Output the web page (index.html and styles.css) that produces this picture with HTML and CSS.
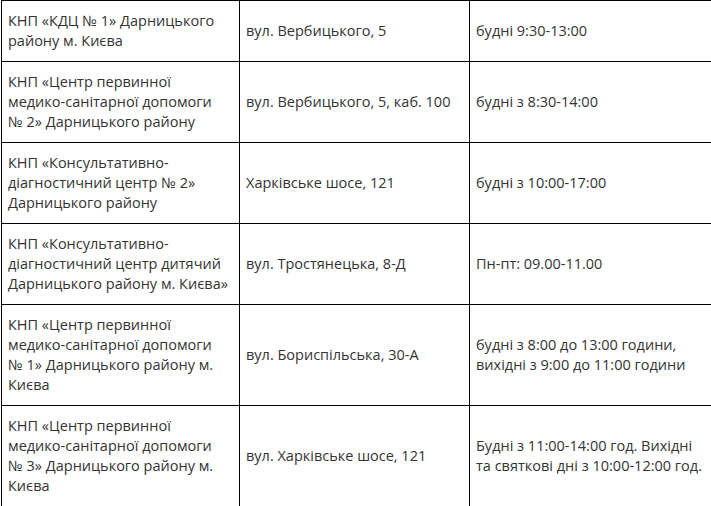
FILE: index.html
```html
<!DOCTYPE html>
<html lang="uk">
<head>
<meta charset="utf-8">
<link rel="stylesheet" href="styles.css">
</head>
<body>
<div class="wrap">
<table class="grid">
  <colgroup><col class="c1"><col class="c2"><col class="c3"></colgroup>
  <tbody>
    <tr>
      <td>КНП «КДЦ № 1» Дарницького<br>району м. Києва</td>
      <td>вул. Вербицького, 5</td>
      <td>будні 9:30-13:00</td>
    </tr>
    <tr>
      <td>КНП «Центр первинної<br>медико-санітарної допомоги<br>№ 2» Дарницького району</td>
      <td>вул. Вербицького, 5, каб. 100</td>
      <td>будні з 8:30-14:00</td>
    </tr>
    <tr>
      <td>КНП «Консультативно-<br>діагностичний центр № 2»<br>Дарницького району</td>
      <td>Харківське шосе, 121</td>
      <td>будні з 10:00-17:00</td>
    </tr>
    <tr>
      <td>КНП «Консультативно-<br>діагностичний центр дитячий<br>Дарницького району м. Києва»</td>
      <td>вул. Тростянецька, 8-Д</td>
      <td>Пн-пт: 09.00-11.00</td>
    </tr>
    <tr>
      <td>КНП «Центр первинної<br>медико-санітарної допомоги<br>№ 1» Дарницького району м.<br>Києва</td>
      <td>вул. Бориспільська, 30-А</td>
      <td>будні з 8:00 до 13:00 години,<br>вихідні з 9:00 до 11:00 години</td>
    </tr>
    <tr>
      <td>КНП «Центр первинної<br>медико-санітарної допомоги<br>№ 3» Дарницького району м.<br>Києва</td>
      <td>вул. Харківське шосе, 121</td>
      <td>Будні з 11:00-14:00 год. Вихідні<br>та святкові дні з 10:00-12:00 год.</td>
    </tr>
  </tbody>
</table>
</div>
</body>
</html>
```
FILE: styles.css
```css
html, body {
  margin: 0;
  padding: 0;
  background: #fff;
}
.wrap {
  padding-left: 1px;
  overflow: hidden;
  width: 711px;
  height: 506px;
}
.grid {
  border-collapse: collapse;
  table-layout: fixed;
  width: 712px;
  font-family: "Open Sans", sans-serif;
  font-size: 14.5px;
  line-height: 20px;
  color: #333;
}
.c1 { width: 238px; }
.c2 { width: 230px; }
.c3 { width: 244px; }
.grid td {
  border: 1px solid #000;
  padding: 10px 6px;
  vertical-align: middle;
  text-align: left;
  white-space: nowrap;
}
```
